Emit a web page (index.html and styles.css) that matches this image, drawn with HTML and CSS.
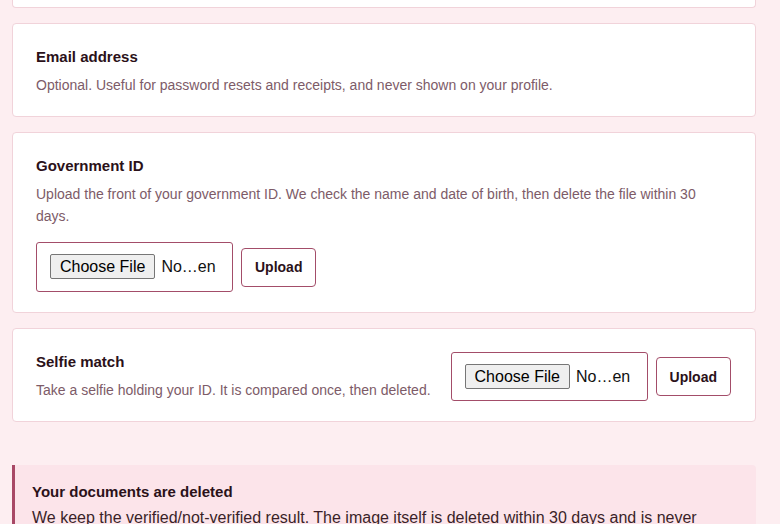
FILE: index.html
```html
<!DOCTYPE html>
<html lang="en">
<head>
<meta charset="utf-8">
<title>Verification</title>
<link rel="stylesheet" href="styles.css">
</head>
<body>
<main class="page">
  <div class="card card-clipped"></div>

  <section class="card">
    <h3 class="card-title">Email address</h3>
    <p class="card-desc">Optional. Useful for password resets and receipts, and never shown on your profile.</p>
  </section>

  <section class="card">
    <h3 class="card-title">Government ID</h3>
    <p class="card-desc">Upload the front of your government ID. We check the name and date of birth, then delete the file within 30 days.</p>
    <div class="upload-row upload-row-below">
      <label class="file-box">
        <input class="file-input" type="file">
        <span class="file-btn">Choose File</span>
        <span class="file-name">No…en</span>
      </label>
      <button class="upload-btn" type="button">Upload</button>
    </div>
  </section>

  <section class="card card-inline">
    <div class="card-text">
      <h3 class="card-title">Selfie match</h3>
      <p class="card-desc">Take a selfie holding your ID. It is compared once, then deleted.</p>
    </div>
    <div class="upload-row">
      <label class="file-box">
        <input class="file-input" type="file">
        <span class="file-btn">Choose File</span>
        <span class="file-name">No…en</span>
      </label>
      <button class="upload-btn" type="button">Upload</button>
    </div>
  </section>

  <aside class="callout">
    <h4 class="callout-title">Your documents are deleted</h4>
    <p class="callout-body">We keep the verified/not-verified result. The image itself is deleted within 30 days and is never shared with anyone.</p>
  </aside>
</main>
</body>
</html>
```
FILE: styles.css
```css
* { box-sizing: border-box; }

html, body {
  margin: 0;
  padding: 0;
  background: #fdeef1;
}

body {
  font-family: "Liberation Sans", Arial, sans-serif;
  color: #2b1119;
}

.page {
  display: flex;
  flex-direction: column;
  gap: 15px;
  padding: 0 24px 40px 12px;
}

.card {
  background: #ffffff;
  border: 1px solid #f1d3da;
  border-radius: 4px;
  padding: 23px 24px 20px 23px;
}

.card-clipped {
  height: 8px;
  padding: 0;
  border-top: none;
  border-radius: 0 0 4px 4px;
}

.card-title {
  margin: 0;
  font-size: 15px;
  line-height: 20px;
  font-weight: 700;
  color: #2b1119;
}

.card-desc {
  margin: 7px 0 0;
  font-size: 14px;
  line-height: 22px;
  color: #7d5b68;
}

.card-inline {
  display: flex;
  align-items: center;
  justify-content: space-between;
  gap: 16px;
}

.upload-row {
  display: flex;
  align-items: center;
  gap: 8px;
}

.upload-row-below {
  margin-top: 15px;
}

.file-box {
  position: relative;
  display: flex;
  align-items: center;
  gap: 6px;
  width: 197px;
  padding: 11px 13px 12px;
  border: 1px solid #a34d69;
  border-radius: 3px;
  background: #ffffff;
  cursor: pointer;
}

.card-inline .file-box {
  padding-bottom: 11px;
}

.file-input {
  position: absolute;
  width: 1px;
  height: 1px;
  opacity: 0;
  overflow: hidden;
}

.file-btn {
  display: inline-flex;
  align-items: center;
  height: 25px;
  padding: 0 9px;
  border: 1px solid #767676;
  border-radius: 2px;
  background: #efefef;
  font-family: "Liberation Sans", Arial, sans-serif;
  font-size: 16px;
  color: #000000;
  white-space: nowrap;
}

.file-name {
  font-family: "Liberation Sans", Arial, sans-serif;
  font-size: 16px;
  color: #111111;
  white-space: nowrap;
}

.upload-btn {
  height: 39px;
  padding: 0 13px;
  border: 1px solid #a34d69;
  border-radius: 4px;
  background: #ffffff;
  font-family: "Liberation Sans", Arial, sans-serif;
  font-size: 14px;
  font-weight: 700;
  color: #2b1119;
}

.callout {
  margin-top: 28px;
  background: #fce4ea;
  border-left: 3px solid #a84866;
  border-radius: 0 4px 4px 0;
  padding: 17px 20px 16px 17px;
}

.callout-title {
  margin: 0;
  font-size: 15px;
  line-height: 20px;
  font-weight: 700;
  color: #2b1119;
}

.callout-body {
  margin: 4px 0 0;
  font-size: 16px;
  line-height: 24px;
  color: #3a1f28;
}
```
